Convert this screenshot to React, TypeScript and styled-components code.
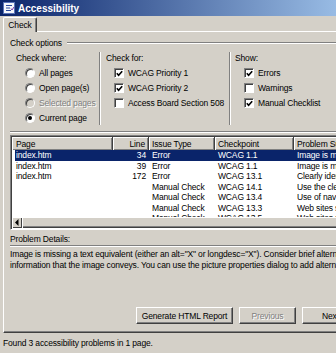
import styled, { createGlobalStyle } from "styled-components";

const GlobalStyle = createGlobalStyle`
  html, body {
    margin: 0;
    padding: 0;
    background: #d4d0c8;
    overflow: hidden;
  }
  body {
    font-family: "Liberation Sans", Arial, sans-serif;
    font-size: 8.5px;
    letter-spacing: -0.15px;
    color: #000;
  }
`;

type Row = {
  page: string;
  line: string;
  type: string;
  checkpoint: string;
  summary: string;
  selected?: boolean;
};

const rows: Row[] = [
  { page: "index.htm", line: "34", type: "Error", checkpoint: "WCAG 1.1", summary: "Image is missing a text equivalent", selected: true },
  { page: "index.htm", line: "39", type: "Error", checkpoint: "WCAG 1.1", summary: "Image is missing a text equivalent" },
  { page: "index.htm", line: "172", type: "Error", checkpoint: "WCAG 13.1", summary: "Clearly identify the target of each link" },
  { page: "", line: "", type: "Manual Check", checkpoint: "WCAG 14.1", summary: "Use the clearest and simplest language" },
  { page: "", line: "", type: "Manual Check", checkpoint: "WCAG 13.4", summary: "Use of navigation mechanisms" },
  { page: "", line: "", type: "Manual Check", checkpoint: "WCAG 13.3", summary: "Web sites should provide information" },
  { page: "", line: "", type: "Manual Check", checkpoint: "WCAG 13.5", summary: "Web sites should provide navigation bars" },
];

// column widths of the list view
const cols = [101, 36, 66, 79, 200];

const Radio = ({ checked, disabled }: { checked?: boolean; disabled?: boolean }) => (
  <RadioBox $disabled={disabled}>{checked && <RadioDot />}</RadioBox>
);

const Check = ({ checked }: { checked?: boolean }) => (
  <CheckBox>
    {checked && (
      <svg width="7" height="7" viewBox="0 0 7 7">
        <path d="M0.8 3.2 L2.6 5.2 L6.2 1.2" fill="none" stroke="#000" strokeWidth="1.6" />
      </svg>
    )}
  </CheckBox>
);

export default function App() {
  return (
    <>
      <GlobalStyle />
      <Window>
        <TitleBar>
          <svg width="12" height="12" viewBox="0 0 12 12">
            <rect x="0.5" y="0.5" width="11" height="11" fill="#f4f6fb" stroke="#5a74b8" />
            <path d="M3 3.5 h6 M3 6 h4 M3 8.5 h5" stroke="#2b4a9c" strokeWidth="1.2" />
            <path d="M8 6.5 l1 1.5 l2 -3" fill="none" stroke="#7a3aa8" strokeWidth="1" />
          </svg>
          <span>Accessibility</span>
        </TitleBar>
        <Frame>
          <TabStrip>
            <Tab>Check</Tab>
          </TabStrip>
          <TabPanel>
            <GroupHeader>Check options</GroupHeader>
            <OptionsRow>
              <OptionColumn $width={90} $pad={6} $indent={9} $divider>
                <OptionTitle>Check where:</OptionTitle>
                <OptionItem>
                  <Radio />
                  <span>All pages</span>
                </OptionItem>
                <OptionItem>
                  <Radio />
                  <span>Open page(s)</span>
                </OptionItem>
                <OptionItem $disabled>
                  <Radio disabled />
                  <span>Selected pages</span>
                </OptionItem>
                <OptionItem>
                  <Radio checked />
                  <span>Current page</span>
                </OptionItem>
              </OptionColumn>
              <OptionColumn $width={130} $pad={6} $indent={8} $divider>
                <OptionTitle>Check for:</OptionTitle>
                <OptionItem>
                  <Check checked />
                  <span>WCAG Priority 1</span>
                </OptionItem>
                <OptionItem>
                  <Check checked />
                  <span>WCAG Priority 2</span>
                </OptionItem>
                <OptionItem>
                  <Check />
                  <span>Access Board Section 508</span>
                </OptionItem>
              </OptionColumn>
              <OptionColumn $width={120} $pad={5} $indent={9}>
                <OptionTitle>Show:</OptionTitle>
                <OptionItem>
                  <Check checked />
                  <span>Errors</span>
                </OptionItem>
                <OptionItem>
                  <Check />
                  <span>Warnings</span>
                </OptionItem>
                <OptionItem>
                  <Check checked />
                  <span>Manual Checklist</span>
                </OptionItem>
              </OptionColumn>
            </OptionsRow>
            <Etched $top={6} />
            <ListBox>
              <ListHeader>
                <HeaderCell $w={cols[0]} $pad={4}>Page</HeaderCell>
                <HeaderCell $w={cols[1]} $right>Line</HeaderCell>
                <HeaderCell $w={cols[2]}>Issue Type</HeaderCell>
                <HeaderCell $w={cols[3]}>Checkpoint</HeaderCell>
                <HeaderCell $w={cols[4]}>Problem Summary</HeaderCell>
              </ListHeader>
              <ListBody>
                {rows.map((r, i) => (
                  <ListRow key={i} $selected={r.selected}>
                    <Cell $w={cols[0] - 3} $pad={1}>{r.page}</Cell>
                    <Cell $w={cols[1]} $right>{r.line}</Cell>
                    <Cell $w={cols[2]}>{r.type}</Cell>
                    <Cell $w={cols[3]}>{r.checkpoint}</Cell>
                    <Cell $w={cols[4]}>{r.summary}</Cell>
                  </ListRow>
                ))}
              </ListBody>
              <ScrollBar>
                <ScrollArrow>
                  <svg width="4" height="7" viewBox="0 0 4 7">
                    <path d="M3.5 0 L0 3.5 L3.5 7 Z" fill="#000" />
                  </svg>
                </ScrollArrow>
                <ScrollThumb />
              </ScrollBar>
            </ListBox>
            <SectionLabel>Problem Details:</SectionLabel>
            <Etched $top={1} />
            <Details>
              Image is missing a text equivalent (either an alt="X" or longdesc="X"). Consider brief alternative text that
              <br />
              information that the image conveys. You can use the picture properties dialog to add alternative text.
            </Details>
            <Spacer />
            <ButtonRow>
              <Button $w={97}>Generate HTML Report</Button>
              <Button $w={57} disabled>Previous</Button>
              <Button $w={57}>Next</Button>
            </ButtonRow>
          </TabPanel>
          <StatusBar>Found 3 accessibility problems in 1 page.</StatusBar>
        </Frame>
      </Window>
    </>
  );
}

const Window = styled.div`
  width: 369px;
  height: 353px;
  display: flex;
  flex-direction: column;
  background: #d4d0c8;
`;

const TitleBar = styled.div`
  height: 16px;
  flex: none;
  display: flex;
  align-items: center;
  gap: 3px;
  padding-left: 3px;
  background: linear-gradient(to right, #0a246a, #a6caf0);
  color: #fff;
  font-weight: bold;
  font-size: 10px;
  letter-spacing: 0;
`;

const Frame = styled.div`
  flex: 1;
  display: flex;
  flex-direction: column;
  padding: 1px 3px 0 3px;
  min-height: 0;
`;

const TabStrip = styled.div`
  height: 14px;
  flex: none;
  display: flex;
  align-items: flex-end;
`;

const Tab = styled.div`
  width: 34px;
  height: 15px;
  box-sizing: border-box;
  margin-bottom: -1px;
  position: relative;
  z-index: 1;
  display: flex;
  align-items: center;
  justify-content: center;
  background: #d4d0c8;
  border-top: 1px solid #fff;
  border-left: 1px solid #fff;
  border-right: 1px solid #404040;
  box-shadow: inset -1px 0 0 #808080;
  border-radius: 2px 2px 0 0;
`;

const TabPanel = styled.div`
  flex: 1;
  min-height: 0;
  display: flex;
  flex-direction: column;
  padding: 6px 6px 8px 6px;
  border-top: 1px solid #fff;
  border-left: 1px solid #fff;
  border-right: 1px solid #404040;
  border-bottom: 1px solid #404040;
  box-shadow: inset -1px -1px 0 #808080;
`;

const GroupHeader = styled.div`
  height: 10px;
  display: flex;
  align-items: center;
  gap: 5px;
  &::after {
    content: "";
    flex: 1;
    border-top: 1px solid #808080;
    border-bottom: 1px solid #fff;
  }
`;

const OptionsRow = styled.div`
  display: flex;
  margin-top: 4px;
  height: 73px;
`;

const OptionColumn = styled.div<{ $width: number; $pad: number; $indent: number; $divider?: boolean }>`
  width: ${(p) => p.$width}px;
  flex: none;
  box-sizing: border-box;
  padding: 1px 0 0 ${(p) => p.$pad}px;
  border-right: ${(p) => (p.$divider ? "1px solid #808080" : "none")};
  box-shadow: ${(p) => (p.$divider ? "1px 0 0 #fff" : "none")};
  display: flex;
  flex-direction: column;
  & > div + div {
    margin-left: ${(p) => p.$indent}px;
  }
`;

const OptionTitle = styled.div`
  height: 10px;
  line-height: 10px;
  margin-bottom: 2px;
  white-space: nowrap;
`;

const OptionItem = styled.div<{ $disabled?: boolean }>`
  height: 15px;
  display: flex;
  align-items: center;
  gap: 4px;
  white-space: nowrap;
  color: ${(p) => (p.$disabled ? "#808080" : "#000")};
  text-shadow: ${(p) => (p.$disabled ? "1px 1px 0 #fff" : "none")};
`;

const RadioBox = styled.div<{ $disabled?: boolean }>`
  width: 10px;
  height: 10px;
  box-sizing: border-box;
  border-radius: 50%;
  border: 1px solid;
  border-color: #808080 #fff #fff #808080;
  box-shadow: inset 1px 1px 0 #404040;
  background: ${(p) => (p.$disabled ? "#d4d0c8" : "#fff")};
  display: flex;
  align-items: center;
  justify-content: center;
`;

const RadioDot = styled.div`
  width: 4px;
  height: 4px;
  border-radius: 50%;
  background: #000;
`;

const CheckBox = styled.div`
  width: 10px;
  height: 10px;
  box-sizing: border-box;
  border: 1px solid;
  border-color: #808080 #fff #fff #808080;
  box-shadow: inset 1px 1px 0 #404040;
  background: #fff;
  display: flex;
  align-items: center;
  justify-content: center;
  padding: 1px 0 0 1px;
`;

const Etched = styled.div<{ $top: number }>`
  margin-top: ${(p) => p.$top}px;
  height: 0;
  border-top: 1px solid #808080;
  border-bottom: 1px solid #fff;
`;

const ListBox = styled.div`
  margin-top: 2px;
  height: 95px;
  box-sizing: border-box;
  border: 1px solid;
  border-color: #808080 #fff #fff #808080;
  padding: 1px;
  box-shadow: inset 1px 1px 0 #404040;
  background: #fff;
  display: flex;
  flex-direction: column;
  overflow: hidden;
`;

const ListHeader = styled.div`
  height: 13px;
  flex: none;
  display: flex;
  background: #d4d0c8;
`;

const HeaderCell = styled.div<{ $w: number; $pad?: number; $right?: boolean }>`
  width: ${(p) => p.$w}px;
  flex: none;
  box-sizing: border-box;
  display: flex;
  align-items: center;
  justify-content: ${(p) => (p.$right ? "flex-end" : "flex-start")};
  padding: 0 ${(p) => (p.$right ? 3 : 0)}px 0 ${(p) => p.$pad ?? 3}px;
  white-space: nowrap;
  overflow: hidden;
  border-right: 1px solid #404040;
  box-shadow: inset 1px 1px 0 #fff, inset -1px -1px 0 #808080;
`;

const ListBody = styled.div`
  height: 67px;
  flex: none;
  overflow: hidden;
`;

const ListRow = styled.div<{ $selected?: boolean }>`
  height: 10.5px;
  display: flex;
  align-items: center;
  margin-left: 3px;
  background: ${(p) => (p.$selected ? "#0a246a" : "transparent")};
  color: ${(p) => (p.$selected ? "#fff" : "#000")};
`;

const Cell = styled.div<{ $w: number; $pad?: number; $right?: boolean }>`
  width: ${(p) => p.$w}px;
  flex: none;
  box-sizing: border-box;
  padding: 0 ${(p) => (p.$right ? 3 : 0)}px 0 ${(p) => p.$pad ?? 3}px;
  text-align: ${(p) => (p.$right ? "right" : "left")};
  white-space: nowrap;
  overflow: hidden;
`;

const ScrollBar = styled.div`
  height: 11px;
  flex: none;
  display: flex;
  background: #e6e3de;
`;

const ScrollArrow = styled.div`
  width: 10px;
  flex: none;
  display: flex;
  align-items: center;
  justify-content: center;
  background: #d4d0c8;
  box-shadow: inset 1px 1px 0 #fff, inset -1px -1px 0 #404040;
`;

const ScrollThumb = styled.div`
  flex: 1;
  background: #d4d0c8;
  box-shadow: inset 1px 1px 0 #fff, inset -1px -1px 0 #404040, inset -2px -2px 0 #808080;
`;

const SectionLabel = styled.div`
  margin-top: 4px;
  height: 10px;
  line-height: 10px;
`;

const Details = styled.div`
  margin-top: 2px;
  line-height: 11px;
  white-space: nowrap;
`;

const Spacer = styled.div`
  flex: 1;
`;

const ButtonRow = styled.div`
  display: flex;
  justify-content: flex-end;
  gap: 6px;
`;

const Button = styled.button<{ $w: number }>`
  width: ${(p) => p.$w}px;
  height: 17px;
  flex: none;
  padding: 0;
  font: inherit;
  letter-spacing: inherit;
  background: #d4d0c8;
  color: #000;
  border: 1px solid;
  border-color: #fff #404040 #404040 #fff;
  box-shadow: inset -1px -1px 0 #808080;
  white-space: nowrap;
  &:disabled {
    color: #808080;
    text-shadow: 1px 1px 0 #fff;
  }
`;

const StatusBar = styled.div`
  height: 20px;
  flex: none;
  display: flex;
  align-items: center;
  padding-left: 0px;
`;
